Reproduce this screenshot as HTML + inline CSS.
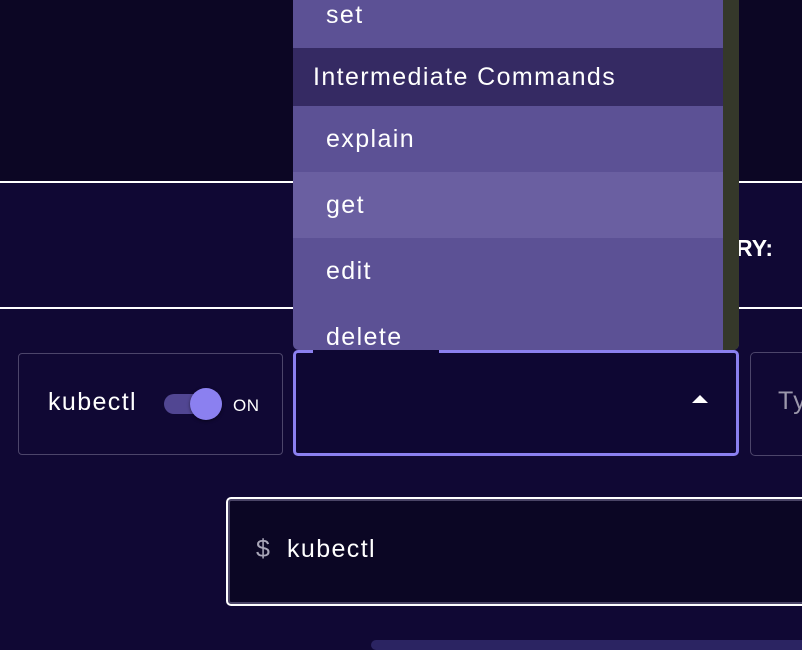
<!DOCTYPE html>
<html><head><style>
*{margin:0;padding:0;box-sizing:border-box}
body{width:802px;height:644px;overflow:hidden;background:#100834;font-family:"Liberation Sans",sans-serif;position:relative;color:#fff}
.a{position:absolute}
.t{font-size:25px;letter-spacing:1.4px}
</style></head><body>
<div class="a" style="left:0;top:0;width:802px;height:182px;background:#0c0624"></div>
<div class="a" style="left:0;top:181px;width:802px;height:2px;background:#fff"></div>
<div class="a" style="left:0;top:183px;width:802px;height:124px;background:#100834"></div>
<div class="a" style="left:0;top:307px;width:802px;height:2px;background:#fff"></div>
<div class="a" style="left:736px;top:235px;font-size:23px;font-weight:bold;">RY:</div>

<!-- left card -->
<div class="a" style="left:18px;top:353px;width:265px;height:102px;border:1px solid #4c456a;border-radius:4px"></div>
<div class="a t" style="left:48px;top:388px;">kubectl</div>
<div class="a" style="left:164px;top:394px;width:58px;height:20px;border-radius:10px;background:#514692"></div>
<div class="a" style="left:190px;top:388px;width:32px;height:32px;border-radius:50%;background:#8b80f0;box-shadow:0 1px 3px rgba(0,0,0,.5)"></div>
<div class="a" style="left:233px;top:396px;font-size:17px;letter-spacing:0.5px">ON</div>

<!-- select -->
<div class="a" style="left:293px;top:350px;width:446px;height:106px;border:3px solid #8b80f0;border-radius:5px;background:#0e0733"></div>
<div class="a" style="left:692px;top:395px;width:0;height:0;border-left:8px solid transparent;border-right:8px solid transparent;border-bottom:8px solid #fff"></div>
<div class="a" style="left:313px;top:346px;width:126px;height:8px;background:#0e0733"></div>

<!-- right card -->
<div class="a" style="left:750px;top:352px;width:80px;height:104px;border:1px solid #4c456a;border-radius:5px"></div>
<div class="a t" style="left:778px;top:387px;color:#9b97ab">Ty</div>

<!-- terminal -->
<div class="a" style="left:226px;top:497px;width:600px;height:109px;border:2px solid #fff;border-radius:5px;background:#0b0624;box-shadow:inset 0 0 0 2px #4a4466"></div>
<div class="a t" style="left:256px;top:535px;color:#a9a6b8">$</div>
<div class="a t" style="left:287px;top:535px;">kubectl</div>
<div class="a" style="left:371px;top:640px;width:440px;height:10px;border-radius:6px;background:#2b2462"></div>

<!-- dropdown -->
<div class="a" style="left:293px;top:-10px;width:446px;height:360px;border-radius:0 0 6px 6px;overflow:hidden;background:#5c5195">
  <div class="a" style="left:430px;top:0;width:16px;height:360px;background:#35382a"></div>
  <div class="a t" style="left:33px;top:10px;line-height:30px;">set</div>
  <div class="a" style="left:0;top:58px;width:430px;height:58px;background:#352a63"></div>
  <div class="a t" style="left:20px;top:73px;line-height:28px;">Intermediate Commands</div>
  <div class="a t" style="left:33px;top:135px;line-height:28px;">explain</div>
  <div class="a" style="left:0;top:182px;width:430px;height:66px;background:#6a5fa1"></div>
  <div class="a t" style="left:33px;top:201px;line-height:28px;">get</div>
  <div class="a t" style="left:33px;top:267px;line-height:28px;">edit</div>
  <div class="a t" style="left:33px;top:333px;line-height:28px;">delete</div>
</div>
</body></html>
